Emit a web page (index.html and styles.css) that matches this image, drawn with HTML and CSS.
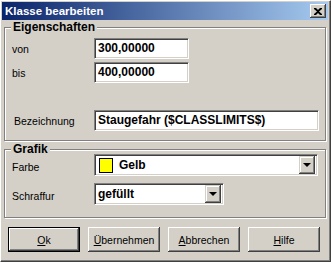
FILE: index.html
```html
<!DOCTYPE html>
<html lang="de">
<head>
    <meta charset="UTF-8">
    <title>Klasse bearbeiten</title>
    <link rel="stylesheet" href="styles.css">
</head>
<body>

    <div class="window">
        <div class="titlebar">
            <span class="title">Klasse bearbeiten</span>
            <button class="btn-close">
                <svg width="8" height="7" viewBox="0 0 8 7"><path d="M0 0h2l2 2 2-2h2v1L5 3.5 8 6v1H6L4 5 2 7H0V6l3-2.5L0 1z" fill="#000"/></svg>
            </button>
        </div>

        <!-- Eigenschaften -->
        <fieldset class="group group-props">
            <legend>Eigenschaften</legend>
            <div class="rows">
                <label>von</label>
                <div class="field field-short">300,00000</div>

                <label>bis</label>
                <div class="field field-short">400,00000</div>

                <label class="lbl-wide row-name">Bezeichnung</label>
                <div class="field field-long row-name">Staugefahr ($CLASSLIMITS$)</div>
            </div>
        </fieldset>

        <!-- Grafik -->
        <fieldset class="group group-graph">
            <legend>Grafik</legend>
            <div class="rows rows-graph">
                <label>Farbe</label>
                <div class="combo combo-long">
                    <span class="swatch"></span>
                    <span class="combo-text">Gelb</span>
                    <span class="drop"><i></i></span>
                </div>

                <label>Schraffur</label>
                <div class="combo combo-short">
                    <span class="combo-text">gefüllt</span>
                    <span class="drop"><i></i></span>
                </div>
            </div>
        </fieldset>

        <div class="buttons">
            <button class="btn btn-default"><u>O</u>k</button>
            <button class="btn"><u>Ü</u>bernehmen</button>
            <button class="btn"><u>A</u>bbrechen</button>
            <button class="btn"><u>H</u>ilfe</button>
        </div>
    </div>

</body>
</html>
```

FILE: styles.css
```css
body {
    margin: 0;
    font-family: "Liberation Sans", Arial, sans-serif;
    font-size: 10.5px;
    color: #000;
}
.window {
    width: 331px;
    height: 262px;
    box-sizing: border-box;
    background: #D4D0C8;
    border-top: 1px solid #fff;
    border-left: 1px solid #fff;
    border-right: 1px solid #404040;
    border-bottom: 1px solid #404040;
    box-shadow: inset -1px -1px 0 #808080;
    padding: 1px 2px 0 1px;
}
.titlebar {
    height: 18px;
    background: linear-gradient(to right, #0A246A, #A6CAF0);
    display: flex;
    align-items: center;
    justify-content: space-between;
    padding: 0 2px 0 3px;
}
.title {
    color: #fff;
    font-weight: bold;
    font-size: 11.5px;
}
.btn-close {
    width: 16px;
    height: 14px;
    padding: 0;
    background: #D4D0C8;
    border: none;
    box-shadow: inset -1px -1px 0 #404040, inset 1px 1px 0 #fff, inset -2px -2px 0 #808080;
    display: flex;
    align-items: center;
    justify-content: center;
}

/* group boxes */
.group {
    margin: 0 2px 0 2px;
    padding: 0;
    border: 1px solid #808080;
    box-shadow: 1px 1px 0 #fff, inset 1px 1px 0 #fff;
}
.group legend {
    font-weight: bold;
    font-size: 12px;
    line-height: 14px;
    padding: 0 2px;
    margin-left: 6px;
    background: #D4D0C8;
}
.group-props { margin-top: 0; height: 121px; box-sizing: border-box; }
.group-graph { margin-top: 1px; height: 76px; box-sizing: border-box; }

.rows {
    display: grid;
    grid-template-columns: 89px auto;
    row-gap: 3px;
    align-items: center;
    padding-top: 4px;
}
.rows label { padding-left: 7px; }
.rows .lbl-wide { padding-left: 9px; }
.row-name { margin-top: 24px; }
.rows-graph { padding-top: 0; margin-top: -2px; row-gap: 7px; }
.rows-graph label { padding-top: 4px; }

/* sunken edit field */
.field {
    height: 21px;
    box-sizing: border-box;
    background: #fff;
    border-top: 1px solid #808080;
    border-left: 1px solid #808080;
    border-right: 1px solid #fff;
    border-bottom: 1px solid #fff;
    box-shadow: inset 1px 1px 0 #404040, inset -1px -1px 0 #D4D0C8;
    font-weight: bold;
    font-size: 12px;
    line-height: 19px;
    padding-left: 3px;
}
.field-short { width: 95px; }
.field-long { width: 225px; }

/* combo box */
.combo {
    height: 22px;
    box-sizing: border-box;
    background: #fff;
    border-top: 1px solid #808080;
    border-left: 1px solid #808080;
    border-right: 1px solid #fff;
    border-bottom: 1px solid #fff;
    box-shadow: inset 1px 1px 0 #404040, inset -1px -1px 0 #D4D0C8;
    display: flex;
    align-items: center;
    padding: 2px 2px 2px 3px;
}
.combo-long { width: 224px; }
.combo-short { width: 130px; }
.swatch {
    width: 12px;
    height: 13px;
    background: #FFFF00;
    border: 1px solid #000;
    margin-left: 1px;
    margin-right: 6px;
}
.combo-text {
    flex: 1;
    font-weight: bold;
    font-size: 12px;
}
.drop {
    width: 16px;
    height: 18px;
    box-sizing: border-box;
    background: #D4D0C8;
    box-shadow: inset -1px -1px 0 #404040, inset 1px 1px 0 #D4D0C8, inset -2px -2px 0 #808080, inset 2px 2px 0 #fff;
    display: flex;
    align-items: center;
    justify-content: center;
}
.drop i {
    width: 0;
    height: 0;
    border-left: 4px solid transparent;
    border-right: 4px solid transparent;
    border-top: 4px solid #000;
}

/* push buttons */
.buttons {
    display: flex;
    gap: 8px;
    padding: 9px 0 0 6px;
}
.btn {
    width: 72px;
    height: 25px;
    background: #D4D0C8;
    font-family: "Liberation Sans", Arial, sans-serif;
    font-size: 10.5px;
    padding: 0;
    border: none;
    box-shadow: inset -1px -1px 0 #404040, inset 1px 1px 0 #fff, inset -2px -2px 0 #808080;
}
.btn-default {
    border: 1px solid #000;
}
```
